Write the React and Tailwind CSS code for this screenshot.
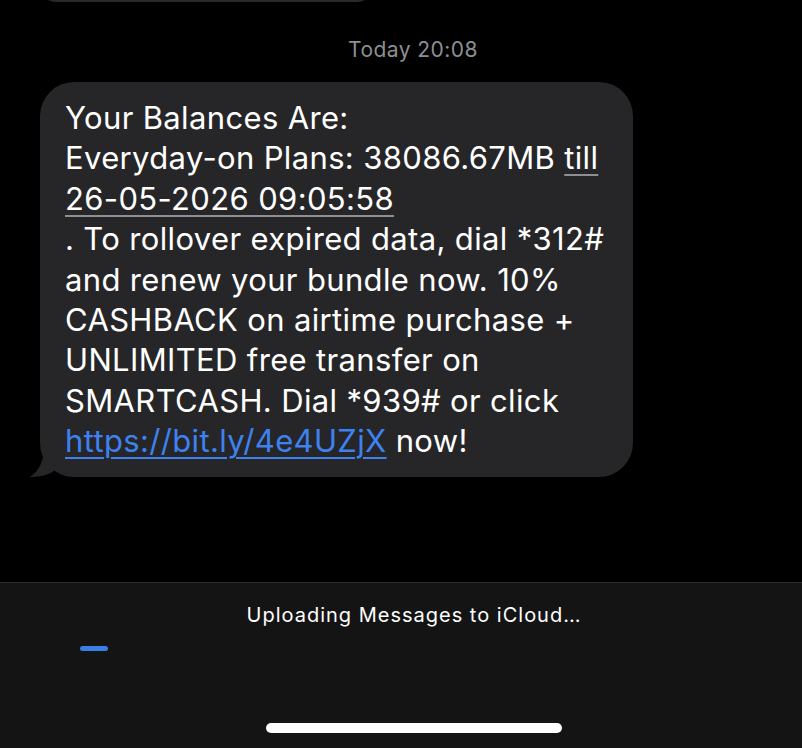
const lines = [
  '. To rollover expired data, dial *312#',
  'and renew your bundle now. 10%',
  'CASHBACK on airtime purchase +',
  'UNLIMITED free transfer on',
  'SMARTCASH. Dial *939# or click',
];

export default function App() {
  return (
    <div
      className="w-[802px] h-[748px] bg-black text-white overflow-hidden flex flex-col"
      style={{ fontFamily: 'Inter, "Noto Sans", sans-serif' }}
    >
      {/* Messages */}
      <div className="h-[582px] relative">
        {/* edge of previous bubble */}
        <div className="absolute left-[40px] top-[-30px] w-[333px] h-[32px] rounded-[24px] bg-[#2a2a2c]" />

        <div className="pt-[37px] pl-[24px] text-center text-[21px] leading-[26px] text-[#8e8e93] tracking-[0.45px]">
          Today 20:08
        </div>

        <div className="mt-[19px] ml-[40px] w-[593px] relative">
          {/* tail */}
          <svg className="absolute left-[-10px] bottom-0" width="40" height="30" viewBox="0 0 40 30">
            <path d="M14 0 C14 14 9 24 0 30 C10 30 19 28 25 23 L40 23 L40 0 Z" fill="#262628" />
          </svg>
          <div className="relative bg-[#262628] rounded-[34px] pl-[25px] pt-[16px] pb-[15px] text-[31px] leading-[40.4px] tracking-[0.35px] whitespace-nowrap">
            <div>Your Balances Are:</div>
            <div>
              Everyday-on Plans: 38086.67MB{' '}
              <span className="underline decoration-[#8e8e93] decoration-2 underline-offset-[5px]">till</span>
            </div>
            <div>
              <span className="underline decoration-[#8e8e93] decoration-2 underline-offset-[5px]">
                26-05-2026 09:05:58
              </span>
            </div>
            {lines.map((l) => (
              <div key={l}>{l}</div>
            ))}
            <div>
              <span className="text-[#3d82f0] underline decoration-2 underline-offset-[5px]">https://bit.ly/4e4UZjX</span>{' '}
              now!
            </div>
          </div>
        </div>
      </div>

      {/* Bottom bar */}
      <div className="h-[166px] bg-[#141414] border-t border-[#2a2a2a] flex flex-col items-center">
        <div className="pt-[19px] pl-[26px] text-[20px] leading-[26px] tracking-[1px]">
          Uploading Messages to iCloud…
        </div>
        <div className="self-start ml-[80px] mt-[18px] w-[28px] h-[5px] rounded-full bg-[#3a7ee8]" />
        <div className="self-start ml-[266px] mt-[72px] w-[296px] h-[10px] rounded-full bg-white" />
      </div>
    </div>
  );
}
